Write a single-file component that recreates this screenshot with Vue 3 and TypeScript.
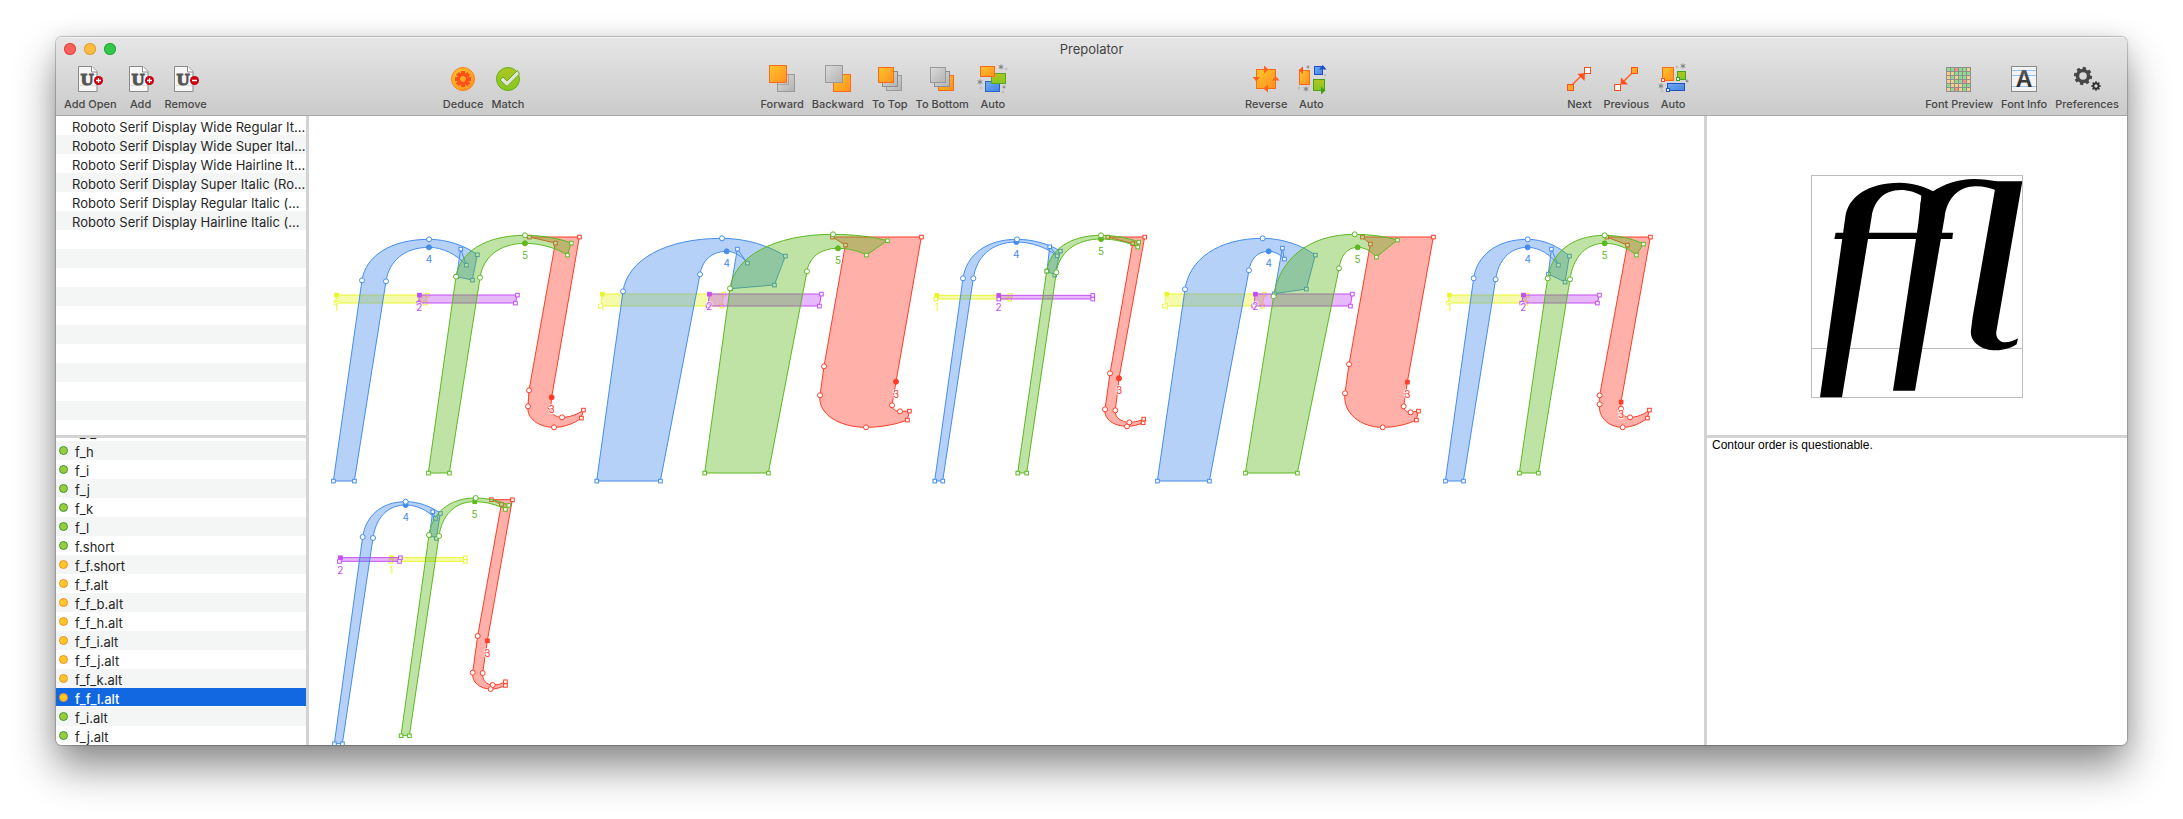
<script setup lang="ts">
import { ref } from 'vue'

type Tone = 'yellow' | 'purple' | 'red' | 'blue' | 'green'

interface Node {
  x: number
  y: number
  round: boolean
  start: boolean
}

interface Contour {
  order: number
  tone: Tone
  d: string
  nodes: Node[]
}

/* Three design units make one pixel. */
const UNIT = 3
const SLANT = 0.14
const ROUND = 0.58

/*
 * Outline notation: "s" corner node, "c" smooth node, "f"/"F" starting node
 * (square/round). A lone letter before a node bends the segment into it:
 * v = stem to arch, h = arch to stem, e = arch to terminal, a = terminal to arch.
 */
function trace(spec: string, ox = 0, oy = 0): { d: string; nodes: Node[] } {
  const nodes: Node[] = []
  const parts: string[] = []
  let bend = ''
  const segment = (p: Node, n: Node): string => {
    const dx = n.x - p.x
    const dy = n.y - p.y
    if (bend === 'v') {
      const r = dy * ROUND
      return `C${p.x - SLANT * r},${p.y + r} ${n.x - dx * ROUND},${n.y} ${n.x},${n.y}`
    }
    if (bend === 'h') {
      const r = dy * ROUND
      return `C${p.x + dx * ROUND},${p.y} ${n.x + SLANT * r},${n.y - r} ${n.x},${n.y}`
    }
    if (bend === 'e') {
      return `C${p.x + dx * 0.38},${p.y} ${p.x + dx * 0.74},${p.y + dy * 0.42} ${n.x},${n.y}`
    }
    if (bend === 'a') {
      return `C${n.x - dx * 0.74},${n.y - dy * 0.42} ${n.x - dx * 0.38},${n.y} ${n.x},${n.y}`
    }
    return `L${n.x},${n.y}`
  }
  for (const token of spec.split(' ')) {
    if (token.length === 1) {
      bend = token
      continue
    }
    const [x, y] = token.slice(1).split(',').map(Number)
    const node: Node = {
      x: ox + x / UNIT,
      y: oy + y / UNIT,
      round: token[0] === 'c' || token[0] === 'F',
      start: token[0] === 'f' || token[0] === 'F',
    }
    parts.push(nodes.length ? segment(nodes[nodes.length - 1], node) : `M${node.x},${node.y}`)
    nodes.push(node)
    bend = ''
  }
  if (bend) parts.push(segment(nodes[nodes.length - 1], nodes[0]))
  return { d: parts.join(' ') + 'Z', nodes }
}

const tones: Tone[] = ['yellow', 'purple', 'red', 'blue', 'green']

function glyph(x: number, y: number, specs: string[]): Contour[] {
  return specs.map((spec, i) => ({ order: i + 1, tone: tones[i], ...trace(spec, x, y) }))
}

const masters: Contour[][] = [
  glyph(1, 104, [
    'f79,225 s352,225 s346,249 s77,249',
    'f328,225 s622,225 s616,249 s326,249',
    'F725,532 s808,51 s658,51 s736,69 c657,511 c654,559 v c732,622 e s814,594 s820,570 a c756,592 h c722,562',
    'F357,82 e s469,135 s452,87 s440,170 s487,180 s502,104 a c357,58 h c156,181 s70,783 s133,783 c228,184 v',
    'F645,70 e s772,105 s784,69 a c645,46 h c438,170 s355,759 s418,759 c510,173 v',
  ]),
  glyph(271, 104, [
    'f67,222 s431,222 s425,258 s61,258',
    'f388,222 s724,222 s718,258 s384,258',
    'F948,485 s1024,51 s757,51 s796,75 c732,439 c720,526 v c858,622 e s982,600 s988,573 c960,574 h c936,556',
    'F440,94 e s502,129 s472,87 s452,206 s583,195 s616,108 a c426,55 h c129,214 s50,783 s241,783 c360,163 v',
    'F774,85 e s859,105 s922,62 a c759,43 h c450,205 s374,759 s565,759 c681,154 v',
  ]),
  glyph(611, 104, [
    'f50,226 s272,226 s269,237 s47,237',
    'f236,226 s518,226 s518,237 s236,237',
    'F597,475 s674,51 s563,51 s638,71 c570,460 c555,568 v c621,619 e s669,608 s671,597 a c628,607 h c586,571',
    'F289,66 e s411,107 s389,80 s381,153 s404,165 s421,93 a c291,58 h c129,175 s44,783 s68,783 c160,175 v',
    'F543,57 e s653,81 s656,66 a c543,46 h s380,153 s293,759 s320,759 c409,157 v',
  ]),
  glyph(831, 104, [
    'f80,222 s373,222 s367,258 s73,258',
    'f346,222 s637,222 s631,258 s341,258',
    'f802,486 s880,51 s667,51 s691,72 c627,433 c615,520 v c728,622 e s829,600 s835,573 c812,577 h c791,559',
    'F386,94 e s433,117 s427,84 s403,221 s499,207 s526,105 a c368,55 h c135,208 s52,783 s208,783 c327,151 v',
    'F653,82 e s709,111 s772,60 a c644,43 h c401,229 s316,759 s472,759 c597,145 v',
  ]),
  glyph(1121, 104, [
    'f58,225 s292,225 s287,249 s55,249',
    'f280,225 s508,225 s502,249 s275,249',
    'f573,546 s661,51 s530,51 s592,75 c509,526 c509,553 v c578,622 e s652,594 s658,570 a c600,592 h c573,566',
    'F293,82 e s385,135 s364,87 s355,162 s405,186 s418,108 a c293,58 h c131,175 s46,783 s100,783 c197,178 v',
    'F524,70 e s619,105 s640,72 a c524,46 h c353,175 s268,759 s325,759 c420,178 v',
  ]),
  glyph(1, 364, [
    'f244,233 s466,233 s466,244 s242,244',
    'f91,233 s271,233 s268,244 s88,244',
    'f532,482 s607,59 s544,59 s574,73 c503,468 c488,578 v c542,627 e s586,616 s586,605 a c548,615 h c518,579',
    'F287,75 e s376,115 s368,95 s359,165 s379,175 s391,100 a c287,65 h c158,171 s73,791 s97,791 c189,174 v',
    'f494,65 e s586,88 s596,76 a c497,54 h c357,165 s273,767 s298,767 c387,168 v',
  ]),
]

const previewPaths = [
  'F632,120 e s694,137 s691,170 s745,170 s729,124 a c628,98 h c466,200 s390,742 s456,742 c545,200 v',
  'F858,109 e s918,121 s950,110 s918,94 a c852,87 e s729,124 s692,155 s685,220 s609,722 s675,722 c764,200 v',
  'c919,545 v c945,577 e s984,565 s980,583 a c918,601 h c843,540 s848,500 s915,118 s905,94 s997,94',
  's437,248 s789,248 s787,267 s433,267',
].map((spec) => trace(spec, -121, -25).d)

const fonts = [
  'Roboto Serif Display Wide Regular It...',
  'Roboto Serif Display Wide Super Ital...',
  'Roboto Serif Display Wide Hairline It...',
  'Roboto Serif Display Super Italic (Ro...',
  'Roboto Serif Display Regular Italic (...',
  'Roboto Serif Display Hairline Italic (...',
]

const glyphs: { name: string; ok: boolean }[] = [
  { name: 'f_f_l', ok: true },
  { name: 'f_h', ok: true },
  { name: 'f_i', ok: true },
  { name: 'f_j', ok: true },
  { name: 'f_k', ok: true },
  { name: 'f_l', ok: true },
  { name: 'f.short', ok: true },
  { name: 'f_f.short', ok: false },
  { name: 'f_f.alt', ok: false },
  { name: 'f_f_b.alt', ok: false },
  { name: 'f_f_h.alt', ok: false },
  { name: 'f_f_i.alt', ok: false },
  { name: 'f_f_j.alt', ok: false },
  { name: 'f_f_k.alt', ok: false },
  { name: 'f_f_l.alt', ok: false },
  { name: 'f_i.alt', ok: true },
  { name: 'f_j.alt', ok: true },
]
const selected = ref('f_f_l.alt')

const toolbar: { icon: string; label: string }[][] = [
  [
    { icon: 'add-open', label: 'Add Open' },
    { icon: 'add', label: 'Add' },
    { icon: 'remove', label: 'Remove' },
  ],
  [
    { icon: 'deduce', label: 'Deduce' },
    { icon: 'match', label: 'Match' },
  ],
  [
    { icon: 'forward', label: 'Forward' },
    { icon: 'backward', label: 'Backward' },
    { icon: 'top', label: 'To Top' },
    { icon: 'bottom', label: 'To Bottom' },
    { icon: 'auto-order', label: 'Auto' },
  ],
  [
    { icon: 'reverse', label: 'Reverse' },
    { icon: 'auto-direction', label: 'Auto' },
  ],
  [
    { icon: 'next', label: 'Next' },
    { icon: 'previous', label: 'Previous' },
    { icon: 'auto-start', label: 'Auto' },
  ],
  [
    { icon: 'preview', label: 'Font Preview' },
    { icon: 'info', label: 'Font Info' },
    { icon: 'preferences', label: 'Preferences' },
  ],
]

const cellRows = ['ggrggy', 'yygggg', 'ygyggy', 'yyggry', 'gyyygg', 'ygrygy']
const cellColors: Record<string, string> = { g: '#90db90', y: '#f5d08c', r: '#f29090' }
const teeth = [0, 45, 90, 135, 180, 225, 270, 315]

interface Spark {
  x: number
  y: number
  kind: 'star' | 'plus' | 'faint'
}
const sparks: Record<string, Spark[]> = {
  'auto-order': [
    { x: 24, y: 4, kind: 'star' },
    { x: 3, y: 19, kind: 'star' },
    { x: 27, y: 24, kind: 'plus' },
    { x: 29, y: 6, kind: 'faint' },
    { x: 4, y: 25, kind: 'faint' },
    { x: 26, y: 29, kind: 'faint' },
  ],
  'auto-direction': [
    { x: 11, y: 26, kind: 'star' },
    { x: 13, y: 4, kind: 'plus' },
    { x: 30, y: 12, kind: 'faint' },
    { x: 4, y: 25, kind: 'faint' },
  ],
  'auto-start': [
    { x: 26, y: 3, kind: 'star' },
    { x: 4, y: 23, kind: 'star' },
    { x: 30, y: 18, kind: 'plus' },
    { x: 20, y: 4, kind: 'faint' },
    { x: 5, y: 28, kind: 'faint' },
  ],
}
</script>

<template>
  <div class="desktop">
    <main class="window">
      <svg class="defs" aria-hidden="true">
        <defs>
          <linearGradient id="orange" x1="0" y1="0" x2="1" y2="1">
            <stop offset="0" stop-color="#ffc62b" />
            <stop offset="1" stop-color="#ff8f1f" />
          </linearGradient>
          <linearGradient id="gray" x1="0" y1="0" x2="1" y2="1">
            <stop offset="0" stop-color="#dcdcdc" />
            <stop offset="1" stop-color="#b2b2b2" />
          </linearGradient>
          <linearGradient id="lime" x1="0" y1="0" x2="0" y2="1">
            <stop offset="0" stop-color="#b0c420" />
            <stop offset="1" stop-color="#86c820" />
          </linearGradient>
          <linearGradient id="sky" x1="0" y1="0" x2="1" y2="1">
            <stop offset="0" stop-color="#72aaf5" />
            <stop offset="1" stop-color="#4385e0" />
          </linearGradient>
          <linearGradient id="ink" x1="0" y1="0" x2="0" y2="1">
            <stop offset="0" stop-color="#666" />
            <stop offset="1" stop-color="#1c1c1c" />
          </linearGradient>
        </defs>
      </svg>

      <header class="chrome">
        <div class="titlebar">
          <div class="lights">
            <button class="light close" aria-label="Close"></button>
            <button class="light minimize" aria-label="Minimize"></button>
            <button class="light zoom" aria-label="Zoom"></button>
          </div>
          <h1 class="title">Prepolator</h1>
        </div>
        <nav class="toolbar" aria-label="Toolbar">
          <div v-for="(group, g) in toolbar" :key="g" class="group">
            <button v-for="tool in group" :key="tool.icon" class="tool">
              <svg class="icon" width="32" height="32" viewBox="0 0 32 32" aria-hidden="true">
                <template v-if="tool.icon === 'add-open' || tool.icon === 'add' || tool.icon === 'remove'">
                  <path d="M4.500 3.500H18L23 8.500V28.500H4.500Z" fill="#f6f6f6" stroke="#8a8a8a" />
                  <path d="M17.500 3.500V9H23" fill="#fff" stroke="#8a8a8a" />
                  <path d="M6 11.500H22M6 22.500H22" stroke="#ddd" />
                  <text x="13" y="22" class="u-mark">U</text>
                  <circle cx="24.500" cy="17.500" r="4.500" fill="#c8000f" />
                  <path d="M22 17.500H27" stroke="#fff" stroke-width="1.300" />
                  <path v-if="tool.icon !== 'remove'" d="M24.500 15V20" stroke="#fff" stroke-width="1.300" />
                </template>
                <template v-else-if="tool.icon === 'deduce'">
                  <circle cx="16" cy="16" r="11.500" fill="url(#orange)" stroke="#ff7d18" />
                  <rect v-for="t in teeth" :key="t" x="14" y="8" width="4" height="5" fill="#ff4f1a" :transform="`rotate(${t} 16 16)`" />
                  <circle cx="16" cy="16" r="4.500" fill="none" stroke="#ff4f1a" stroke-width="3" />
                </template>
                <template v-else-if="tool.icon === 'match'">
                  <circle cx="16" cy="16" r="11.500" fill="url(#lime)" stroke="#62b01c" />
                  <path d="M8 17L11 14L15 18L25.500 7.500L27.500 11L15 23.500Z" fill="#e2e6da" stroke="#68a81c" />
                </template>
                <template v-else-if="tool.icon === 'forward'">
                  <rect x="11.500" y="11.500" width="17" height="17" fill="url(#gray)" stroke="#999" />
                  <path d="M11 21.500H22.500V12" fill="none" stroke="#8a8a8a" opacity="0.5" />
                  <rect x="3.500" y="2.500" width="17" height="17" fill="url(#orange)" stroke="#ff6a1a" />
                </template>
                <template v-else-if="tool.icon === 'backward'">
                  <rect x="11.500" y="11.500" width="17" height="17" fill="url(#orange)" stroke="#ff6a1a" />
                  <rect x="3.500" y="2.500" width="17" height="17" fill="url(#gray)" stroke="#999" />
                </template>
                <template v-else-if="tool.icon === 'top'">
                  <rect x="12.500" y="12.500" width="15" height="15" fill="url(#gray)" stroke="#999" />
                  <rect x="8.500" y="8.500" width="15" height="15" fill="url(#gray)" stroke="#8c8c8c" />
                  <rect x="4.500" y="4.500" width="15" height="15" fill="url(#orange)" stroke="#ff6a1a" />
                </template>
                <template v-else-if="tool.icon === 'bottom'">
                  <rect x="12.500" y="12.500" width="15" height="15" fill="url(#orange)" stroke="#ff6a1a" />
                  <rect x="8.500" y="8.500" width="15" height="15" fill="url(#gray)" stroke="#8c8c8c" />
                  <rect x="4.500" y="4.500" width="15" height="15" fill="url(#gray)" stroke="#999" />
                </template>
                <template v-else-if="tool.icon === 'auto-order'">
                  <rect x="8.500" y="18.500" width="14" height="10" fill="url(#sky)" stroke="#2a62c8" />
                  <rect x="14.500" y="10.500" width="14" height="10" fill="url(#lime)" stroke="#58a81c" />
                  <rect x="3.500" y="3.500" width="14" height="10" fill="url(#orange)" stroke="#ff6a1a" />
                </template>
                <template v-else-if="tool.icon === 'reverse'">
                  <rect x="6.500" y="6.500" width="19" height="19" fill="url(#orange)" stroke="#ff6a1a" />
                  <path d="M14 2.500L18.500 6.500L14 10.500ZM22 17.500L25.700 13L29.500 17.500ZM18 21.500L13.500 25.500L18 29.500ZM2.500 14L6.300 18.500L10 14Z" fill="#ff641a" />
                </template>
                <template v-else-if="tool.icon === 'auto-direction'">
                  <rect x="4.500" y="7.500" width="10" height="14" fill="url(#orange)" stroke="#ff6a1a" />
                  <path d="M8 3.500V11L3.500 7.300Z" fill="#ff5a1a" />
                  <rect x="19.500" y="3.500" width="8" height="8" fill="url(#sky)" stroke="#1f50c8" />
                  <path d="M24 6.500L27.700 2L31.500 6.500Z" fill="#1f50c8" />
                  <rect x="18.500" y="16.500" width="11" height="11" fill="url(#lime)" stroke="#4ba01c" />
                  <path d="M26 23.500L30.500 27.500L26 31.500Z" fill="#3fa01c" />
                </template>
                <template v-else-if="tool.icon === 'next'">
                  <path d="M9 22L20 11" stroke="#ff5a28" stroke-width="1.500" />
                  <path d="M22 10L14.500 11L21.500 18Z" fill="#ff4f1a" />
                  <rect x="4.500" y="21.500" width="6" height="6" fill="#ffa826" stroke="#ff4f1a" />
                  <rect x="21.500" y="4.500" width="6" height="6" fill="#fff" stroke="#ff4f1a" />
                </template>
                <template v-else-if="tool.icon === 'previous'">
                  <path d="M12 20L23 9" stroke="#ff5a28" stroke-width="1.500" />
                  <path d="M10.500 21.500L11 14.500L18 21.500Z" fill="#ff4f1a" />
                  <rect x="21.500" y="4.500" width="6" height="6" fill="#ffa826" stroke="#ff4f1a" />
                  <rect x="4.500" y="21.500" width="6" height="6" fill="#fff" stroke="#ff4f1a" />
                </template>
                <template v-else-if="tool.icon === 'auto-start'">
                  <rect x="5.500" y="4.500" width="11" height="13" fill="url(#orange)" stroke="#ff6a1a" />
                  <rect x="4.500" y="15.500" width="3" height="3" fill="#fff" stroke="#ff4f1a" />
                  <rect x="20.500" y="8.500" width="8" height="8" fill="url(#lime)" stroke="#4ba01c" />
                  <rect x="19.500" y="14.500" width="3" height="3" fill="#fff" stroke="#3fa01c" />
                  <rect x="10.500" y="20.500" width="17" height="7" fill="url(#sky)" stroke="#1f50c8" />
                  <rect x="9.500" y="25.500" width="3" height="3" fill="#fff" stroke="#1f50c8" />
                </template>
                <template v-else-if="tool.icon === 'preview'">
                  <rect x="3" y="4" width="25" height="25" fill="#8f8f8f" />
                  <template v-for="(row, r) in cellRows" :key="r">
                    <rect v-for="(cell, c) in row.split('')" :key="c" :x="4 + c * 4" :y="5 + r * 4" width="3" height="3" :fill="cellColors[cell]" />
                  </template>
                </template>
                <template v-else-if="tool.icon === 'info'">
                  <rect x="3.500" y="3.500" width="25" height="25" fill="#f3f3f3" stroke="#8a8a8a" />
                  <path d="M4 7.500H28M4 12.500H28M4 23.500H28" stroke="#8fc2f2" />
                  <text x="16" y="24" class="a-mark">A</text>
                </template>
                <template v-else>
                  <circle cx="12" cy="13" r="5.500" fill="none" stroke="#4a4a4a" stroke-width="3.500" />
                  <rect v-for="t in teeth" :key="t" x="10.300" y="4" width="3.400" height="4" fill="#454545" :transform="`rotate(${t + 10} 12 13)`" />
                  <circle cx="25" cy="23" r="2.600" fill="none" stroke="#303030" stroke-width="1.800" />
                  <rect v-for="t in teeth" :key="`s${t}`" x="24.200" y="18.300" width="1.600" height="2.200" fill="#303030" :transform="`rotate(${t} 25 23)`" />
                </template>
                <g v-for="(s, i) in sparks[tool.icon] ?? []" :key="`k${i}`" :class="['spark', s.kind]">
                  <path v-if="s.kind === 'star'" :d="`M${s.x} ${s.y - 2.5}v5M${s.x - 2.3} ${s.y - 1.3}l4.600 2.600M${s.x - 2.3} ${s.y + 1.3}l4.600 -2.600`" />
                  <path v-else :d="`M${s.x} ${s.y - 1.5}v3M${s.x - 1.5} ${s.y}h3`" />
                </g>
              </svg>
              <span class="tool-label">{{ tool.label }}</span>
            </button>
          </div>
        </nav>
      </header>

      <div class="body">
        <aside class="column sidebar">
          <ul class="list fonts" aria-label="Fonts">
            <li v-for="font in fonts" :key="font">
              <button class="row font-row">{{ font }}</button>
            </li>
          </ul>
          <ul class="list glyphs" aria-label="Glyphs">
            <li v-for="(item, i) in glyphs" :key="item.name" :class="{ odd: i % 2 === 1 }">
              <button
                class="row glyph-row"
                :class="{ selected: item.name === selected }"
                :aria-pressed="item.name === selected"
                @click="selected = item.name"
              >
                <span class="dot" :class="{ warn: !item.ok }"></span>{{ item.name }}
              </button>
            </li>
          </ul>
        </aside>

        <section class="canvas" aria-label="Masters">
          <svg class="board" width="100%" height="100%">
            <g v-for="(contours, m) in masters" :key="m">
              <g v-for="c in contours" :key="c.order" :class="c.tone">
                <path class="outline" :d="c.d" />
                <template v-for="(n, k) in c.nodes" :key="k">
                  <circle v-if="n.round" class="node" :class="{ start: n.start }" :cx="n.x" :cy="n.y" r="2.500" />
                  <rect v-else class="node" :class="{ start: n.start }" :x="n.x - 1.7" :y="n.y - 1.7" width="3.600" height="3.600" />
                </template>
                <text class="order" :x="c.nodes[0].x" :y="c.nodes[0].y + 16">{{ c.order }}</text>
              </g>
            </g>
          </svg>
        </section>

        <aside class="column inspector">
          <div class="preview">
            <svg width="212" height="223" viewBox="0 0 212 223" role="img" aria-label="Glyph preview">
              <rect x="0.500" y="0.500" width="211" height="222" fill="none" stroke="#bdbdbd" />
              <path d="M0 173.500H212" stroke="#bdbdbd" />
              <path v-for="d in previewPaths" :key="d" :d="d" />
            </svg>
          </div>
          <p class="report">Contour order is questionable.</p>
        </aside>
      </div>
    </main>
  </div>
</template>

<style>
html,
body {
  background: #fff;
}
</style>

<style scoped>
.desktop {
  box-sizing: border-box;
  display: flex;
  height: 100vh;
  min-height: 600px;
  padding: 37px 56px 74px;
  overflow: hidden;
  font-family: Inter, "Liberation Sans", sans-serif;
  color: #262626;
}
.window {
  flex: 1;
  min-width: 0;
  display: flex;
  flex-direction: column;
  overflow: hidden;
  border-radius: 6px;
  background: #fff;
  box-shadow: 0 0 1px 1px rgba(0, 0, 0, 0.22), 0 22px 42px rgba(0, 0, 0, 0.46), 0 0 20px rgba(0, 0, 0, 0.08);
}
.defs {
  position: absolute;
  width: 0;
  height: 0;
}
button {
  margin: 0;
  padding: 0;
  border: 0;
  background: none;
  font: inherit;
  color: inherit;
}
.chrome {
  background: linear-gradient(#e6e6e6, #cbcbcb);
  border-bottom: 1px solid #a6a6a6;
  box-shadow: inset 0 1px #f4f4f4;
}
.titlebar {
  display: grid;
  grid-template-columns: 1fr auto 1fr;
  align-items: center;
  height: 24px;
  padding: 0 8px;
}
.lights {
  display: flex;
  gap: 8px;
}
.light {
  width: 12px;
  height: 12px;
  border-radius: 50%;
}
.close {
  background: #fc605b;
  box-shadow: inset 0 0 0 1px #df4744;
}
.minimize {
  background: #fdbc40;
  box-shadow: inset 0 0 0 1px #de9f34;
}
.zoom {
  background: #34c84a;
  box-shadow: inset 0 0 0 1px #27aa35;
}
.title {
  margin: 0;
  font-size: 13px;
  line-height: 16px;
  font-weight: 400;
  color: #444;
}
.toolbar {
  display: flex;
  justify-content: space-between;
  padding: 2px 8px 3px;
}
.group {
  display: flex;
  gap: 8px;
}
.tool {
  display: flex;
  flex-direction: column;
  align-items: center;
  gap: 1px;
  min-width: 32px;
}
.icon {
  display: block;
}
.tool-label {
  font-size: 11px;
  line-height: 16px;
  font-weight: 500;
  color: #484848;
  white-space: nowrap;
}
.u-mark {
  font: bold 15px "DejaVu Serif", serif;
  fill: #555;
  stroke: #555;
  text-anchor: middle;
}
.a-mark {
  font: bold 23px "Liberation Sans", sans-serif;
  fill: url(#ink);
  text-anchor: middle;
}
.spark {
  fill: none;
  stroke: #808080;
}
.faint {
  stroke: #b8b8b8;
}
.body {
  flex: 1;
  min-height: 0;
  display: grid;
  grid-template-columns: 250px 1fr 420px;
  gap: 3px;
  background: #d3d3d3;
}
.column {
  display: grid;
  grid-template-rows: 319fr 307fr;
  gap: 3px;
  min-height: 0;
}
.list {
  margin: 0;
  padding: 0;
  list-style: none;
  overflow: hidden;
  min-height: 0;
  font-size: 13px;
  background: #fff;
}
.fonts {
  background: repeating-linear-gradient(#fff 0 19px, #f4f5f5 19px 38px);
}
.row {
  display: flex;
  align-items: center;
  width: 100%;
  height: 19px;
  padding-top: 3px;
  line-height: 16px;
  text-align: left;
  white-space: nowrap;
}
.font-row {
  padding-left: 16px;
}
.glyphs {
  display: flex;
  flex-direction: column;
  justify-content: flex-end;
}
.glyphs li {
  flex: none;
  height: 19px;
}
.odd {
  background: #f4f5f5;
}
.glyph-row {
  gap: 7px;
  padding-left: 3px;
}
.selected {
  height: 18px;
  background: #1268e0;
  color: #fff;
  font-weight: 500;
}
.dot {
  box-sizing: border-box;
  width: 9px;
  height: 9px;
  margin-bottom: 3px;
  border: 1px solid #3f9a35;
  border-radius: 50%;
  background: #9acb3c;
}
.warn {
  border-color: #f58a2c;
  background: #ffc928;
}
.canvas {
  min-width: 0;
  min-height: 0;
  overflow: hidden;
  background: #fff;
}
.board {
  display: block;
}
.yellow {
  --tone: #e9f62e;
}
.purple {
  --tone: #c44df4;
}
.red {
  --tone: #ff3b28;
}
.blue {
  --tone: #468dea;
}
.green {
  --tone: #5cb91f;
}
.outline {
  fill: var(--tone);
  fill-opacity: 0.4;
  stroke: var(--tone);
}
.node {
  fill: #fff;
  stroke: var(--tone);
}
.start {
  fill: var(--tone);
}
.order {
  font-size: 10px;
  text-anchor: middle;
  fill: var(--tone);
  stroke: #fff;
  stroke-width: 2px;
  stroke-opacity: 0.7;
  paint-order: stroke;
}
.preview {
  display: flex;
  align-items: center;
  justify-content: center;
  padding-top: 22px;
  min-height: 0;
  background: #fff;
}
.report {
  margin: 0;
  padding: 0 5px;
  background: #fff;
  color: #000;
  font: 12px/14px "Liberation Sans", Arial, sans-serif;
}
</style>
